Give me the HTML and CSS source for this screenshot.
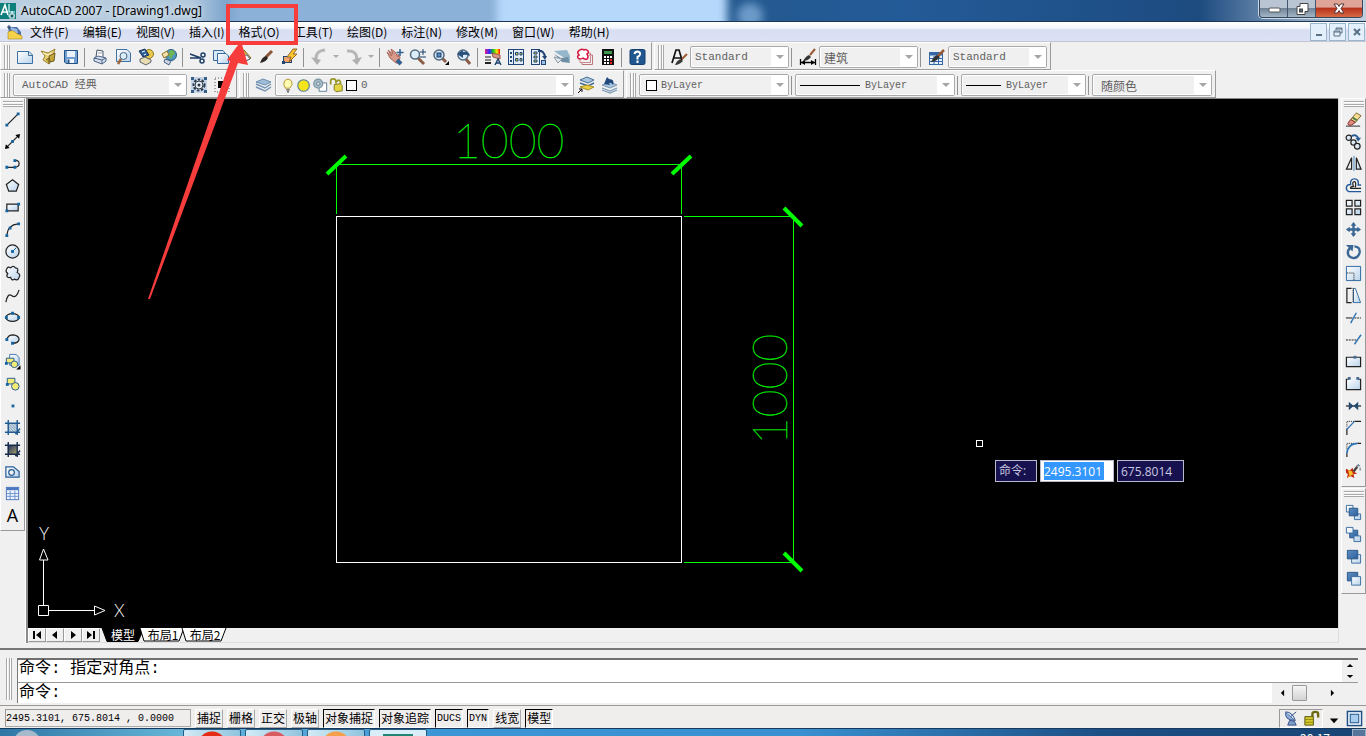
FILE: index.html
```html
<!DOCTYPE html>
<html lang="zh-CN">
<head>
<meta charset="utf-8">
<meta name="viewport" content="width=device-width, initial-scale=1">
<title>AutoCAD 2007 - [Drawing1.dwg]</title>
<link rel="stylesheet" href="styles.css">
</head>
<body>
<svg class="defs" aria-hidden="true">
  <defs>
    <linearGradient id="paper" x1="0" y1="0" x2="1" y2="1"><stop offset="0" stop-color="#fff"/><stop offset="1" stop-color="#b9d3ec"/></linearGradient>
    <linearGradient id="deep" x1="0" y1="0" x2="1" y2="1"><stop offset="0" stop-color="#5f8fc4"/><stop offset="1" stop-color="#2c5f9b"/></linearGradient>
    <linearGradient id="dusk" x1="0" y1="0" x2="1" y2="1"><stop offset="0" stop-color="#22305e"/><stop offset="1" stop-color="#a9a36a"/></linearGradient>
    <linearGradient id="rainbow"><stop offset="0" stop-color="#e0218a"/><stop offset=".3" stop-color="#2c2cff"/><stop offset=".55" stop-color="#19c51b"/><stop offset=".8" stop-color="#ffe600"/><stop offset="1" stop-color="#f00"/></linearGradient>
    <pattern id="hatch" width="3" height="3" patternUnits="userSpaceOnUse"><path d="M0 0L3 3" stroke="#2c6aa0" stroke-width="1"/></pattern>
  </defs>
</svg>

<header class="titlebar">
  <div class="glass" aria-hidden="true"><span class="glass-tab"></span><span class="glass-tab bright"></span><span class="glass-dot"></span></div>
  <svg class="app-logo" viewBox="0 0 16 16"><rect width="16" height="16" fill="#0f7f7c"/><path d="M1 12L5 2L8 12M2 9H8" fill="none" stroke="#fff" stroke-width="1.6"/><path d="M9 1V9H15M12 8V15M8 13H15" fill="none" stroke="#dff" stroke-width="1.2"/><rect x="10" y="11" width="4" height="4" fill="#0f5f66" stroke="#fff"/></svg>
  <h1>AutoCAD 2007 - [Drawing1.dwg]</h1>
  <div class="window-buttons">
    <button aria-label="最小化"><svg viewBox="0 0 16 14"><rect x="3" y="6" width="11" height="4" rx="1" fill="#fff" stroke="#555"/></svg></button>
    <button aria-label="还原"><svg viewBox="0 0 16 14"><path d="M6 1.500H14V9.500H11V12.500H3V4.500H6Z" fill="#fff" stroke="#444"/><rect x="5.500" y="7" width="3" height="3" fill="#567" stroke="#444"/></svg></button>
    <button class="close" aria-label="关闭"><svg viewBox="0 0 16 14"><path d="M3 2H6.500L8 4.500L9.500 2H13L10 6.500L13 11H9.500L8 8.500L6.500 11H3L6 6.500Z" fill="#fff" stroke="#533"/></svg></button>
  </div>
</header>

<nav class="menubar" aria-label="菜单">
  <svg class="doc-logo" viewBox="0 0 16 16"><path d="M1 3H10L14 8V15H3Z" fill="#4c6eaa"/><path d="M3 3L10 5L11 9H6Z" fill="#9db9e2"/><path d="M1 8Q6 5 9 9L15 12V15H1Z" fill="#f6d24a" stroke="#a8861a" stroke-width=".6"/><path d="M2 1V5M0 3H4" stroke="#246"/></svg>
  <button>文件(F)</button><button>编辑(E)</button><button>视图(V)</button><button>插入(I)</button><button class="marked">格式(O)</button><button>工具(T)</button><button>绘图(D)</button><button>标注(N)</button><button>修改(M)</button><button>窗口(W)</button><button>帮助(H)</button>
  <div class="mdi-buttons">
    <button aria-label="最小化文档"><svg viewBox="0 0 12 12"><path d="M3 9H9" stroke="#5a7186" stroke-width="2"/></svg></button>
    <button aria-label="还原文档"><svg viewBox="0 0 12 12"><path d="M4 4V2H10V7H8M4 3H10M2 5H8V10H2ZM2 6H8" fill="none" stroke="#5a7186"/></svg></button>
    <button aria-label="关闭文档"><svg viewBox="0 0 12 12"><path d="M3 3L9 9M9 3L3 9" stroke="#5a7186" stroke-width="2"/></svg></button>
  </div>
</nav>

<div class="toolrow">
  <div class="toolbar">
    <i class="grip"></i>
    <button aria-label="新建"><svg viewBox="0 0 18 18"><path d="M1.500 3.500H13L16.500 7V15.500H1.500Z" fill="url(#paper)" stroke="#3a6f9f"/><path d="M12.500 4V7.500H16" fill="none" stroke="#3a6f9f"/></svg></button>
    <button aria-label="打开"><svg viewBox="0 0 18 18"><path d="M2 3L9 5L16 1L14 8L10 16L4 12L6 8Z" fill="#e9cf74" stroke="#9a8230"/><path d="M10 16V10L7 12M10 8L16 5L15 13L11 14Z" fill="#c5a63c" stroke="#6d5a1e"/><path d="M4 5L9 7L13 5" stroke="#fff6c8" fill="none"/></svg></button>
    <button aria-label="保存"><svg viewBox="0 0 18 18"><path d="M2.500 2.500H15.500V15.500H4L2.500 14Z" fill="#6d9fd2" stroke="#205182"/><rect x="5" y="3" width="8" height="6" fill="#e8f2fc"/><rect x="5" y="11" width="7" height="4" fill="#f4f8fc"/><path d="M6.500 11.500V15" stroke="#205182" stroke-width="2"/></svg></button>
    <i class="sep"></i>
    <button aria-label="打印"><svg viewBox="0 0 18 18"><path d="M5 9L6 2L12 3L12 9" fill="#fff" stroke="#456"/><path d="M3 10L7 8L15 10V13L11 16L3 13Z" fill="#d5deeb" stroke="#4a6286"/><path d="M3 10L11 12L15 10M11 12V16" fill="none" stroke="#4a6286"/><path d="M7 5H11" stroke="#99a"/></svg></button>
    <button aria-label="打印预览"><svg viewBox="0 0 18 18"><path d="M2.500 1.500H13L16.500 5V13.500H2.500Z" fill="url(#paper)" stroke="#41719f"/><path d="M7 11L4 16" stroke="#a06640" stroke-width="2.500"/><circle cx="9.500" cy="8" r="3.500" fill="#d9ecfa" stroke="#47637e"/></svg></button>
    <button aria-label="发布"><svg viewBox="0 0 18 18"><circle cx="12" cy="6" r="4.500" fill="#e9c94b" stroke="#8d7a20"/><path d="M2 3L8 1L12 7L6 9Z" fill="#2f5f98" stroke="#1a3558"/><path d="M3 11L8 9L14 12V14L9 17L3 14Z" fill="#e7ddb0" stroke="#5f6474"/><path d="M5 4L8 3M7 7L9 6" stroke="#fff"/></svg></button>
    <button aria-label="三维 DWF"><svg viewBox="0 0 18 18"><circle cx="11" cy="7" r="5.500" fill="#4f98bd" stroke="#275c80"/><path d="M10 2Q15 2 15 6Q11 7 12 11Q7 9 10 2" fill="#6db653"/><path d="M2 6L7 3L9 7L4 10Z" fill="#f0e2aa" stroke="#8e7427"/><path d="M5 11L11 13L9 17L4 14Z" fill="#cad6e5" stroke="#4a6484"/></svg></button>
    <i class="sep"></i>
    <button aria-label="剪切"><svg viewBox="0 0 18 18"><path d="M1 6L12 10M1 10H12" stroke="#1d3d67" stroke-width="1.500"/><circle cx="14" cy="7" r="2" fill="none" stroke="#1d3d67" stroke-width="1.500"/><circle cx="13" cy="13" r="2" fill="none" stroke="#1d3d67" stroke-width="1.500"/></svg></button>
    <button aria-label="复制"><svg viewBox="0 0 18 18"><path d="M1.500 2.500H11L13 5V12.500H1.500Z" fill="#d9e9f7" stroke="#386b9c"/><path d="M5.500 5.500H14L16.500 8V15.500H5.500Z" fill="url(#paper)" stroke="#386b9c"/></svg></button>
    <button aria-label="粘贴"><svg viewBox="0 0 18 18"><path d="M3 5L9 2L16 10L8 15L3 12Z" fill="#d9b64c" stroke="#806522"/><path d="M6 8L12 7L15 11L8 14Z" fill="#f2f6fb" stroke="#586f8b"/></svg></button>
    <button aria-label="特性匹配"><svg viewBox="0 0 18 18"><path d="M8 9L14 3" stroke="#8a5637" stroke-width="3"/><path d="M2 15Q4 9 8 8L10 10Q8 14 2 15" fill="#2a2522"/></svg></button>
    <button aria-label="块编辑器"><svg viewBox="0 0 18 18"><rect x="2.500" y="8.500" width="8" height="6" fill="#f4a46b" stroke="#23466f"/><path d="M12 1L6 9H10L8 14L16 6H12L16 1Z" fill="#ffc62d" stroke="#94642b"/><rect x="1" y="13" width="3" height="3" fill="#23466f"/></svg></button>
    <i class="sep"></i>
    <button aria-label="放弃"><svg viewBox="0 0 18 18"><path d="M15 2Q5 3 6 12" fill="none" stroke="#b6b6b6" stroke-width="3"/><path d="M1 9L11 12L7 17Z" fill="#b0b0b0"/></svg></button>
    <button class="drop" aria-label="放弃列表"><svg viewBox="0 0 8 8"><path d="M1 2H7L4 5Z" fill="#aaa"/></svg></button>
    <button aria-label="重做"><svg viewBox="0 0 18 18"><path d="M2 3Q12 2 12 12" fill="none" stroke="#b6b6b6" stroke-width="3"/><path d="M7 12L17 9L12 17Z" fill="#b0b0b0"/></svg></button>
    <button class="drop" aria-label="重做列表"><svg viewBox="0 0 8 8"><path d="M1 2H7L4 5Z" fill="#aaa"/></svg></button>
    <i class="sep"></i>
    <button aria-label="平移"><svg viewBox="0 0 18 18"><path d="M1 4L6 8L2 2L7 6L5 1L9 4L12 9V6L14 9L13 15L10 15L4 10Z" fill="#d89a8a" stroke="#a86759"/><path d="M11 12L15 16" stroke="#315f91" stroke-width="4"/><path d="M14 1V8M10.500 4.500H17.500" stroke="#315f91" stroke-width="1.500"/></svg></button>
    <button aria-label="实时缩放"><svg viewBox="0 0 18 18"><path d="M9 10L15 16" stroke="#8b5d47" stroke-width="3"/><circle cx="6" cy="6.500" r="4.500" fill="#dcecf8" stroke="#526a82" stroke-width="1.500"/><path d="M14 1V7M11 4H17M11 9H17" stroke="#173e6b"/></svg></button>
    <button aria-label="窗口缩放"><svg viewBox="0 0 18 18"><path d="M10 10L14 14" stroke="#8b5d47" stroke-width="3"/><circle cx="7" cy="7" r="5" fill="#dcecf8" stroke="#526a82" stroke-width="1.500"/><rect x="5" y="5" width="4" height="4" fill="#5b8cc0" stroke="#173e6b"/><path d="M17 13V17H13Z"/></svg></button>
    <button aria-label="缩放上一个"><svg viewBox="0 0 18 18"><path d="M10 10L15 16" stroke="#8b5d47" stroke-width="3"/><circle cx="8" cy="7" r="5" fill="#dcecf8" stroke="#526a82" stroke-width="1.500"/><path d="M2 6L8 2V4Q14 3 15 8Q11 6 8 7V10Z" fill="#294f7c"/></svg></button>
    <i class="sep"></i>
    <button aria-label="特性"><svg viewBox="0 0 18 18"><rect x="1" y="1" width="15" height="5" fill="url(#rainbow)"/><path d="M8 5L16 7V11L9 9Z" fill="#d89a8a" stroke="#965345"/><path d="M1 9H7M1 12H7" stroke="#222"/><path d="M1 15H7" stroke="#222" stroke-width="2"/><path d="M11 17L14 11L17 17M12 15H16" fill="none" stroke="#173e6b" stroke-width="1.300"/></svg></button>
    <button aria-label="设计中心"><svg viewBox="0 0 18 18"><rect x="1.500" y="1.500" width="15" height="15" fill="#e3edf7" stroke="#1f4675"/><path d="M6.500 2V16" stroke="#1f4675"/><path d="M3 5H5M3 9H5M3 13H5" stroke="#1f4675" stroke-width="2"/><path d="M8.500 4.500H11V7H8.500ZM13 4.500H15V7H13ZM8.500 10.500H11V13H8.500ZM13 10.500H15V13H13Z" fill="#d9c64a" stroke="#1f4675"/></svg></button>
    <button aria-label="工具选项板"><svg viewBox="0 0 18 18"><rect x="1.500" y="1.500" width="8" height="15" fill="#e3edf7" stroke="#1f4675"/><path d="M4 4H7V6H4ZM4 8H7V10H4ZM4 12H7V14H4Z" fill="#d9c64a" stroke="#1f4675"/><path d="M8 3Q14 2 15 9" fill="none" stroke="#1f4675" stroke-width="2"/><path d="M12 8H17L15 12Z" fill="#1f4675"/><rect x="11.500" y="12.500" width="4" height="4" fill="#9fc3e6" stroke="#1f4675"/></svg></button>
    <button aria-label="图纸集"><svg viewBox="0 0 18 18"><path d="M1 3L14 2L17 8V13L5 6Z" fill="#94b7cb"/><path d="M1 6L8 10L15 9L17 15L9 14Z" fill="#6f8ea4"/><path d="M1 9L9 11L5 15Z" fill="#e1e9ef" stroke="#8a99a6"/></svg></button>
    <button aria-label="标记集"><svg viewBox="0 0 18 18"><path d="M13 7H16.500V16.500H6V14" fill="none" stroke="#b77"/><path d="M12 5H14.500V14.500H4V12" fill="none" stroke="#c88"/><path d="M4 2Q6 .5 8 2Q10 .5 12 3Q13 5 11 6Q13 9 11 11Q9 12 7 10Q4 12 2 10Q1 8 3 7Q0 4 4 2Z" fill="#fff" stroke="#d4143e" stroke-width="1.500"/></svg></button>
    <button aria-label="快速计算器"><svg viewBox="0 0 18 18"><rect x="3" y="1" width="12" height="16" fill="#111"/><rect x="5" y="3" width="8" height="3" fill="#3b9b4c"/><path d="M5 9H7M8 9H10M11 9H13M5 12H7M8 12H10M5 15H7M8 15H10" stroke="#fff" stroke-width="2"/><path d="M11 12H13M11 15H13" stroke="#e22" stroke-width="2"/></svg></button>
    <i class="sep"></i>
    <button aria-label="帮助"><svg viewBox="0 0 18 18"><rect x="2" y="1.500" width="15" height="15" rx="1.500" fill="#20578f" stroke="#153f6e"/><path d="M6.500 6Q7 3.500 9.500 3.500Q12.500 4 12 6.500Q11.500 8 9.500 9V11.500M9.500 12.500V15" fill="none" stroke="#fff" stroke-width="2"/></svg></button>
  </div>
  <div class="toolbar">
    <i class="grip"></i>
    <button aria-label="文字样式"><svg viewBox="0 0 18 18"><path d="M2 15L6 2H9L12 12M4 10H11" fill="none" stroke="#111" stroke-width="1.700"/><path d="M12 11L17 6" stroke="#9b5a35" stroke-width="2"/><path d="M5 17Q7 12 11 11L13 13Q9 17 5 17" fill="#383838"/></svg></button>
    <div class="combo w99"><select aria-label="文字样式控制"><option>Standard</option></select><i></i></div>
    <i class="sep"></i>
    <button aria-label="标注样式"><svg viewBox="0 0 18 18"><path d="M1.500 11V17M16.500 11V17M2 14.500H16" stroke="#000" stroke-width="1.300"/><path d="M2 14.500L6 12V17ZM16 14.500L12 12V17Z"/><path d="M11 7L16 1" stroke="#9b5a35" stroke-width="2"/><path d="M4 13Q7 8 10 7L12 9Q9 13 4 13" fill="#333"/></svg></button>
    <div class="combo w99 han"><select aria-label="标注样式控制"><option>建筑</option></select><i></i></div>
    <i class="sep"></i>
    <button aria-label="表格样式"><svg viewBox="0 0 18 18"><rect x="1.500" y="4.500" width="13" height="12" fill="#e4effc" stroke="#3567a7"/><path d="M2 6H14" stroke="#3567a7" stroke-width="3"/><path d="M2 10.500H14M2 13.500H14M6 8V16M10.500 8V16" stroke="#3567a7"/><path d="M10 8L16 2" stroke="#9b5a35" stroke-width="2.500"/><path d="M3 14Q6 8 9 7L12 9Q8 14 3 14" fill="#333"/></svg></button>
    <div class="combo w99"><select aria-label="表格样式控制"><option>Standard</option></select><i></i></div>
  </div>
</div>

<div class="toolrow">
  <div class="toolbar">
    <i class="grip"></i>
    <div class="combo w174 inset"><select aria-label="工作空间"><option>AutoCAD 经典</option></select><i></i></div>
    <button aria-label="工作空间设置"><svg viewBox="0 0 18 18"><rect x="1" y="1" width="16" height="16" fill="#c6d6e8"/><path d="M1 1H4V4H1ZM14 1H17V4H14ZM1 14H4V17H1ZM14 14H17V17H14Z" fill="#345d8a"/><circle cx="9" cy="9" r="5.500" fill="#dbe4ec" stroke="#29394b" stroke-width="2" stroke-dasharray="2.500 1.500"/><circle cx="9" cy="9" r="4" fill="#e9eef3" stroke="#29394b"/><circle cx="9" cy="9" r="1.500" fill="#29394b"/></svg></button>
    <button aria-label="我的工作空间"><svg viewBox="0 0 18 18"><rect x="2" y="2" width="14" height="14" fill="none" stroke="#555" stroke-dasharray="1 2"/><path d="M5 5H12V12H5ZM13 3H16V6H13Z"/></svg></button>
  </div>
  <div class="toolbar">
    <i class="grip"></i>
    <button aria-label="图层特性"><svg viewBox="0 0 18 18"><path d="M1 6L8 3L16 6L10 9Z" fill="#9fbcd8" stroke="#6f90ae"/><path d="M1 8L10 12L16 8M1 11L10 15L16 11" fill="none" stroke="#7394b4" stroke-width="1.500"/></svg></button>
    <div class="combo w299">
      <svg viewBox="0 0 18 18"><path d="M6 12Q3 8 5 4Q9 0 13 4Q15 8 11 12Z" fill="#fffbb0" stroke="#a98d25"/><path d="M7 14H11M8 16H10" stroke="#555" stroke-width="1.500"/></svg>
      <svg viewBox="0 0 18 18"><circle cx="8.500" cy="9" r="6.500" fill="#f4e51c" stroke="#5c8192" stroke-width="1.300"/></svg>
      <svg viewBox="0 0 18 18"><path d="M10 6H16.500V15.500H8V12" fill="#fff" stroke="#55738f"/><circle cx="7" cy="7" r="5" fill="#a7bcc8" stroke="#7f9aa6" stroke-width="1.500"/><circle cx="7" cy="7" r="2" fill="#c9d6dc" stroke="#6e8794"/></svg>
      <svg viewBox="0 0 18 18"><path d="M3 8V4Q3 1.500 6 1.500Q9 1.500 9 5V7M10 5Q12 1 14 5V8" fill="none" stroke="#98972a" stroke-width="2"/><path d="M7 8L14 7L16 9V15L9 16L7 14Z" fill="#e4d545" stroke="#77741c"/></svg>
      <b class="swatch"></b>
      <select aria-label="图层"><option>0</option></select><i></i>
    </div>
    <button aria-label="置为当前图层"><svg viewBox="0 0 18 18"><path d="M3 4L10 1L17 4L11 7Z" fill="#a9c6df" stroke="#446f96"/><path d="M3 7L11 10L17 7" fill="none" stroke="#446f96" stroke-width="1.500"/><path d="M3 11L10 9L17 11L11 14Z" fill="#eccf45" stroke="#a88f22"/><path d="M1 17L5 13M2 13H5V16" fill="none" stroke="#111"/></svg></button>
    <button aria-label="上一个图层"><svg viewBox="0 0 18 18"><path d="M2 9L10 6L17 9L10 12Z" fill="#a9c6df" stroke="#7d9ab5"/><path d="M2 12L10 15L17 12M2 14L10 17L17 14" fill="none" stroke="#7d9ab5" stroke-width="1.300"/><path d="M4 8L7 1L9 3Q15 3 13 9Q11 6 9 7L10 9Z" fill="#21497d"/></svg></button>
  </div>
  <div class="toolbar">
    <i class="grip"></i>
    <div class="combo w150 by"><b class="swatch"></b><select aria-label="颜色"><option>ByLayer</option></select><i></i></div>
    <i class="sep"></i>
    <div class="combo w160 by"><b class="stroke"></b><select aria-label="线型"><option>ByLayer</option></select><i></i></div>
    <i class="sep"></i>
    <div class="combo w125 by"><b class="stroke short"></b><select aria-label="线宽"><option>ByLayer</option></select><i></i></div>
    <i class="sep"></i>
    <div class="combo w120 han inset"><select aria-label="打印样式"><option>随颜色</option></select><i></i></div>
  </div>
</div>

<main class="work">
  <aside class="dock left">
    <div class="palette">
      <i class="hgrip"></i>
      <button aria-label="直线"><svg viewBox="0 0 18 18"><path class="k" d="M3 15L15 3"/><path class="n" d="M1.500 13.500h3v3h-3zM13.500 1.500h3v3h-3z"/></svg></button>
      <button aria-label="构造线"><svg viewBox="0 0 18 18"><path class="k" d="M3 15L15 3"/><path d="M1 17L2 12L6 16ZM17 1L12 2L16 6Z"/><path class="n" d="M7.500 7.500h3v3h-3z"/></svg></button>
      <button aria-label="多段线"><svg viewBox="0 0 18 18"><path class="k" d="M3 13H11Q16 13 16 9Q16 5 11 6"/><path class="n" d="M1.500 11.500h3v3h-3zM10 11.500h3v3h-3zM10 4.500h3v3h-3z"/></svg></button>
      <button aria-label="正多边形"><svg viewBox="0 0 18 18"><path class="p" d="M9 3L15.500 8L13 15H5L2.500 8Z"/></svg></button>
      <button aria-label="矩形"><svg viewBox="0 0 18 18"><path class="p" d="M3 5.500H15V12.500H3Z"/><path class="n" d="M1.500 11h3v3h-3zM14 4h3v3h-3z"/></svg></button>
      <button aria-label="圆弧"><svg viewBox="0 0 18 18"><path class="k" d="M3 15Q4 4 15 3"/><path class="n" d="M1.500 14h3v3h-3zM5 6h3v3h-3zM14 1.500h3v3h-3z"/></svg></button>
      <button aria-label="圆"><svg viewBox="0 0 18 18"><circle class="p" cx="9" cy="9" r="7"/><path d="M9 9L13 5" stroke="#146099"/><path class="n" d="M7.500 7.500h3v3h-3z"/></svg></button>
      <button aria-label="修订云线"><svg viewBox="0 0 18 18"><path class="p" d="M4 9Q1 7 3 4Q4 1 7 3Q10 0 12 3Q16 3 14 8Q18 10 16 13Q15 17 11 15Q8 17 7 13Q3 14 3 11Z"/></svg></button>
      <button aria-label="样条曲线"><svg viewBox="0 0 18 18"><path class="k" d="M2 16Q4 6 8 9Q13 13 16 3"/></svg></button>
      <button aria-label="椭圆"><svg viewBox="0 0 18 18"><ellipse class="p" cx="9" cy="9" rx="7" ry="4"/><path class="n" d="M1 7.500h3v3h-3zM7.500 3h3v3h-3zM14 7.500h3v3h-3z"/></svg></button>
      <button aria-label="椭圆弧"><svg viewBox="0 0 18 18"><path class="p" d="M3 9Q4 4 10 4Q16 5 16 9Q15 13 9 13"/><path class="n" d="M1.500 7.500h3v3h-3zM7.500 11.500h3v3h-3z"/></svg></button>
      <button aria-label="插入块"><svg viewBox="0 0 18 18"><path d="M6 1.500H13L16 5V13H6Z" fill="url(#paper)" stroke="#4478ab"/><path class="y" d="M2.500 5.500H10.500V10.500H2.500Z"/><circle class="y" cx="11" cy="12" r="3.500"/><path class="n" d="M1 9.500h3v3h-3z"/><path d="M17.500 13V17.500H13Z"/></svg></button>
      <button aria-label="创建块"><svg viewBox="0 0 18 18"><path class="y" d="M3.500 3.500H11.500V9.500H3.500Z"/><circle class="y" cx="12" cy="12" r="4"/><path class="n" d="M2 8.500h3v3h-3z"/></svg></button>
      <button aria-label="点"><svg viewBox="0 0 18 18"><path class="n" d="M8 8h3v3h-3z"/></svg></button>
      <button aria-label="图案填充"><svg viewBox="0 0 18 18"><path d="M4 5H14V14H4Z" fill="url(#hatch)"/><path d="M4.500 1V17M14 1V17M1 4.500H17M1 14H17M12 16L17 10" fill="none" stroke="#205a91" stroke-width="1.500"/></svg></button>
      <button aria-label="渐变色"><svg viewBox="0 0 18 18"><path d="M4 5H14V14H4Z" fill="url(#dusk)"/><path d="M4.500 1V17M14 1V17M1 4.500H17M1 14H17M12 16L17 10" fill="none" stroke="#182b4a" stroke-width="1.500"/></svg></button>
      <button aria-label="面域"><svg viewBox="0 0 18 18"><path d="M2 4H10L16 9V15H2Z" fill="url(#paper)" stroke="#285f94" stroke-width="1.300"/><circle cx="8" cy="10" r="3" fill="#f0f0f0" stroke="#285f94" stroke-width="1.300"/></svg></button>
      <button aria-label="表格"><svg viewBox="0 0 18 18"><rect x="2.500" y="2.500" width="13" height="13" fill="#eef4fe" stroke="#4c78c0"/><path d="M3 4H15" stroke="#4c78c0" stroke-width="3"/><path d="M3 9H15M3 12H15M6.500 6V15M11.500 6V15" stroke="#6b92d0"/></svg></button>
      <button class="letter" aria-label="多行文字">A</button>
    </div>
  </aside>

  <section class="sheet">
    <div class="canvas">
      <svg class="drawing" aria-label="1000 × 1000">
        <g transform="translate(-28 -99)">
          <rect x="336.500" y="216.500" width="345" height="346" class="white"/>
          <path class="dim" d="M336.500 214V164.500H681.500V214M684 216.500H793.500V562.500H684"/>
          <path class="tick" d="M327 174L346 156M672 174L691 156M784 208L802 226M784 553L802 571"/>
          <text class="dimtext" x="453" y="158">1000</text>
          <text class="dimtext" transform="translate(787 445) rotate(-90)">1000</text>
          <path class="white" d="M38.500 605.500H48.500V615.500H38.500ZM48.500 610.500H94M43.500 605V560M94.500 606L105 610.500L94.500 615ZM39.500 560L43.500 549L48 560Z"/>
          <text class="axis" x="39" y="540">Y</text><text class="axis" x="114" y="617">X</text>
          <rect class="white" x="976.500" y="440.500" width="6" height="6"/>
        </g>
      </svg>
      <div class="dynamic">
        <label for="dx">命令:</label>
        <input id="dx" class="active" value="2495.3101">
        <input aria-label="Y 坐标" value="675.8014">
      </div>
    </div>
    <div class="layouts">
      <button class="step" aria-label="第一个"><svg viewBox="0 0 12 12"><path d="M2 2H4V10H2ZM10 2V10L5 6Z"/></svg></button>
      <button class="step" aria-label="上一个"><svg viewBox="0 0 12 12"><path d="M8 2V10L3 6Z"/></svg></button>
      <button class="step" aria-label="下一个"><svg viewBox="0 0 12 12"><path d="M4 2V10L9 6Z"/></svg></button>
      <button class="step" aria-label="最后一个"><svg viewBox="0 0 12 12"><path d="M8 2H10V10H8ZM2 2V10L7 6Z"/></svg></button>
      <button class="tab on"><svg viewBox="0 0 42 14" preserveAspectRatio="none"><path d="M0 0L5 13.500H36L42 0Z"/></svg><span>模型</span></button>
      <button class="tab"><svg viewBox="0 0 42 14" preserveAspectRatio="none"><path d="M-2 0L2 13H37L42 0"/></svg><span>布局1</span></button>
      <button class="tab"><svg viewBox="0 0 42 14" preserveAspectRatio="none"><path d="M-2 0L2 13H37L42 0"/></svg><span>布局2</span></button>
    </div>
  </section>

  <aside class="dock right">
    <div class="palette">
      <i class="hgrip"></i>
      <button aria-label="删除"><svg viewBox="0 0 18 18"><path d="M1 16H16" stroke="#222"/><path d="M6 9L12 2L17 5L11 12Z" fill="#f5dc8e" stroke="#826132"/><path d="M6 9L11 12L7 15H4L3 13Z" fill="#e08a80" stroke="#80332c"/><path d="M8 7L13 10" stroke="#4f7c46" stroke-width="2"/></svg></button>
      <button aria-label="复制对象"><svg viewBox="0 0 18 18"><circle class="p" cx="4" cy="5" r="2.800"/><circle class="p" cx="9" cy="10" r="2.800"/><circle class="p" cx="13" cy="14" r="3"/><path d="M7 3Q13 1 14 6" fill="none" stroke="#275a93" stroke-width="2"/><path d="M11 5H17L14 9Z" fill="#275a93"/></svg></button>
      <button aria-label="镜像"><svg viewBox="0 0 18 18"><path class="k" d="M7 3V15H1.500Z"/><path d="M9.500 1V17" stroke="#3a84c4"/><path class="p" d="M12 3V15H17Z"/></svg></button>
      <button aria-label="偏移"><svg viewBox="0 0 18 18"><path d="M17 15.500H4Q1 14 1.500 11Q2 8 6 8Q5 2 10 2Q15 2 14 8.500H17" fill="none" stroke="#26599a" stroke-width="1.500"/><path d="M17 12H6Q5 10 9 10Q7 5 10 5Q12 5 11 11" fill="none" stroke="#222" stroke-width="1.300"/></svg></button>
      <button aria-label="阵列"><svg viewBox="0 0 18 18"><path class="p" d="M1.500 1.500h6v6h-6zM10.500 1.500h6v6h-6zM1.500 10.500h6v6h-6zM10.500 10.500h6v6h-6z"/></svg></button>
      <button aria-label="移动"><svg viewBox="0 0 18 18"><path d="M9 3V15M3 9H15" stroke="#3b6795" stroke-width="2.500"/><path d="M9 1L12 5H6ZM9 17L12 13H6ZM1 9L5 6V12ZM17 9L13 6V12Z" fill="#3b6795"/></svg></button>
      <button aria-label="旋转"><svg viewBox="0 0 18 18"><path d="M10 3.500Q16 4 15.500 10Q14 16 9 16Q3 15 3 10Q3 7 6 5" fill="none" stroke="#3b6795" stroke-width="2.500"/><path d="M1 2H9L8 9Z" fill="#3b6795"/></svg></button>
      <button aria-label="缩放"><svg viewBox="0 0 18 18"><path d="M1.500 1.500H16.500V16.500H1.500Z" fill="url(#paper)" stroke="#2b659f"/><path d="M2 8.500H9.500V16" fill="none" stroke="#111" stroke-dasharray="1 1"/></svg></button>
      <button aria-label="拉伸"><svg viewBox="0 0 18 18"><path d="M9 1.500H11L16.500 16.500H9Z" fill="url(#paper)" stroke="#346d9f"/><path class="k" d="M7 1.500H2V16.500H7"/><path d="M8.500 1V17" stroke="#111" stroke-dasharray="1 1"/></svg></button>
      <button aria-label="修剪"><svg viewBox="0 0 18 18"><path d="M1 9.500H8" stroke="#111"/><path d="M10 9.500H17" stroke="#111" stroke-dasharray="2 1"/><path d="M6 15L12 4" stroke="#2f74b4" stroke-width="1.500"/></svg></button>
      <button aria-label="延伸"><svg viewBox="0 0 18 18"><path d="M1 9.500H12" stroke="#111" stroke-dasharray="2 1"/><path d="M10 14L17 4" stroke="#2f74b4" stroke-width="1.500"/></svg></button>
      <button aria-label="打断于点"><svg viewBox="0 0 18 18"><path class="p" d="M1.500 4.500H16.500V14.500H1.500Z"/><path d="M9 3h3v3h-3z" fill="#456a91"/></svg></button>
      <button aria-label="打断"><svg viewBox="0 0 18 18"><path class="p" d="M4 4.500H1.500V15.500H16.500V4.500H14"/><path d="M3 2h3v3h-3zM12 2h3v3h-3z" fill="#456a91"/></svg></button>
      <button aria-label="合并"><svg viewBox="0 0 18 18"><path class="k" d="M1 9.500H17"/><path d="M4 5L9 9.500L4 14ZM14 5L9 9.500L14 14Z" fill="#244a70"/></svg></button>
      <button aria-label="倒角"><svg viewBox="0 0 18 18"><path d="M2 8V2.500H10" fill="none" stroke="#111" stroke-dasharray="1 1"/><path class="k" d="M2 10V17M10 2.500H17"/><path d="M2 11L10 2.500" stroke="#2f74b4" stroke-width="1.500"/></svg></button>
      <button aria-label="圆角"><svg viewBox="0 0 18 18"><path d="M2 8V2.500H10" fill="none" stroke="#111" stroke-dasharray="1 1"/><path class="k" d="M2 13V17M13 2.500H17"/><path d="M2 13Q3 3 13 2.500" fill="none" stroke="#2f74b4" stroke-width="2"/></svg></button>
      <button aria-label="分解"><svg viewBox="0 0 18 18"><path d="M1 6L5 8L8 5L9 9L13 11L9 12L10 16L6 14L2 16L3 12L1 10Z" fill="#c52b12"/><path d="M4 8L7 9L8 12L5 13ZM3 15L6 13" fill="#f8c62a" stroke="#f8c62a"/><path d="M9 9L13 4" stroke="#493e38" stroke-width="2.500"/><path d="M14 1V3M12 3H16M16 5V8" stroke="#49617d"/></svg></button>
    </div>
    <div class="palette order">
      <i class="hgrip"></i>
      <button aria-label="前置"><svg viewBox="0 0 18 18"><path class="l" d="M1.500 1.500h7v7h-7zM10 10.500h6.500v6h-6.500z"/><path class="d" d="M4.500 4.500h9v8h-9z"/></svg></button>
      <button aria-label="后置"><svg viewBox="0 0 18 18"><path class="d" d="M5 4.500h8.500v8h-8.500z"/><path class="l" d="M1.500 1.500h7v6h-7zM9.500 10.500h7v6h-7z"/></svg></button>
      <button aria-label="置于对象之上"><svg viewBox="0 0 18 18"><path class="l" d="M7 7h9.500v9h-9.500z"/><path class="d" d="M2.500 2.500h11v9h-11z"/></svg></button>
      <button aria-label="置于对象之下"><svg viewBox="0 0 18 18"><path class="d" d="M2.500 2.500h11v9h-11z"/><path class="l" d="M7 7h9.500v9h-9.500z"/></svg></button>
    </div>
  </aside>
</main>

<section class="command">
  <i class="grip"></i>
  <div class="console">
    <div class="history"><p>命令: 指定对角点:</p>
      <div class="vscroll"><button aria-label="向上滚动"><svg viewBox="0 0 10 6"><path d="M1 5L5 1L9 5Z"/></svg></button><button aria-label="向下滚动"><svg viewBox="0 0 10 6"><path d="M1 1L5 5L9 1Z"/></svg></button></div>
    </div>
    <div class="prompt"><label for="cmd">命令:</label><input id="cmd">
      <div class="hscroll"><button aria-label="向左滚动"><svg viewBox="0 0 6 10"><path d="M5 1V9L1 5Z"/></svg></button><span class="thumb"></span><button class="end" aria-label="向右滚动"><svg viewBox="0 0 6 10"><path d="M1 1V9L5 5Z"/></svg></button></div>
    </div>
  </div>
</section>

<footer class="status">
  <output class="coords">2495.3101, 675.8014 , 0.0000</output>
  <div class="modes">
    <button>捕捉</button><button>栅格</button><button>正交</button><button>极轴</button><button class="on">对象捕捉</button><button class="on">对象追踪</button><button class="on mono">DUCS</button><button class="on mono">DYN</button><button>线宽</button><button class="on">模型</button>
  </div>
  <div class="tray">
    <div class="tray-box">
      <button aria-label="通讯中心"><svg viewBox="0 0 18 18"><path d="M3 2Q1 11 13 11L8 7Z" fill="#8fb0db" stroke="#2e4d86"/><path d="M3 2Q10 2 13 11" fill="#c9daf1" stroke="#2e4d86"/><path d="M8 7L14 2" fill="none" stroke="#2e4d86"/><path d="M7 11L5 16H14L12 12Z" fill="#7f9ccb" stroke="#2e4d86"/></svg></button>
      <button aria-label="锁定"><svg viewBox="0 0 18 18"><path d="M10 7V4Q10 2 13 2Q16 2 16 4V8" fill="none" stroke="#6b6a12" stroke-width="2.500"/><path d="M2 7H11V16H2Z" fill="#d5c928" stroke="#55530d"/><path d="M2 10H11M2 13H11" stroke="#8c8516"/></svg></button>
    </div>
    <button aria-label="状态栏菜单"><svg viewBox="0 0 18 18"><path d="M4 9H13L8.500 14Z"/></svg></button>
    <button aria-label="全屏显示"><svg viewBox="0 0 18 18"><rect x="1.500" y="1.500" width="15" height="15" fill="#eaf4ff" stroke="#1e4f82" stroke-width="1.500"/><rect x="4.500" y="4.500" width="9" height="9" fill="#a7ceef" stroke="#1e4f82"/></svg></button>
  </div>
</footer>

<div class="taskbar">
  <span class="orb"></span>
  <span class="task red"></span><span class="task rose"></span><span class="task orange"></span><span class="task teal"></span>
  <time>20:17</time><span class="peek"></span>
</div>

<svg class="callout" aria-hidden="true"><rect x="228" y="6" width="68" height="37"/><path d="M241 41L248 65L238 63L150 299L148 299L230 61L227 60Z"/></svg>
</body>
</html>
```

FILE: styles.css
```css
* { box-sizing: border-box; }
body {
  margin: 0;
  height: 100vh;
  display: flex;
  flex-direction: column;
  overflow: hidden;
  position: relative;
  background: #f0f0f0;
  color: #000;
  font: 12px "Noto Sans CJK SC", "Noto Sans", sans-serif;
}
button, input, select { font: inherit; color: inherit; margin: 0; padding: 0; border: 0; background: none; border-radius: 0; }
button { display: flex; align-items: center; justify-content: center; flex: none; white-space: nowrap; }
i, b { display: block; flex: none; }
svg { display: block; flex: none; }
.defs { position: absolute; width: 0; height: 0; }

.titlebar {
  flex: none;
  height: 22px;
  display: flex;
  align-items: center;
  gap: 5px;
  position: relative;
  overflow: hidden;
  border-bottom: 1px solid #1d3653;
  background: linear-gradient(90deg, #b9cfe0 0, #b4cbde 190px, #7fa7cf 225px, #8db2d8 480px, #24598f 740px, #235b98 900px, #1d4b80 1200px, #8aa3c0 1300px, #c0cddb 100%);
}
.glass { position: absolute; inset: -10px 0; display: flex; padding-left: 235px; filter: blur(4px); }
.glass-tab { width: 262px; background: #8cb1d8; }
.glass-tab.bright { width: 230px; background: #b6d8fb; border-radius: 0 8px 0 0; }
.glass-dot { width: 26px; height: 26px; margin: 13px 10px; border-radius: 50%; background: #6c9ac8; }
.app-logo { position: relative; width: 16px; height: 16px; }
.titlebar h1 { position: relative; margin: 0; flex: 1; font: 12px "Noto Sans", sans-serif; text-shadow: 0 0 6px #fff; }
.window-buttons { position: relative; align-self: flex-start; display: flex; margin-right: 3px; border: 1px solid #34465a; border-top: 0; border-radius: 0 0 4px 4px; overflow: hidden; box-shadow: 0 0 0 1px #c9d9e8; }
.window-buttons button { width: 28px; height: 17px; background: linear-gradient(#b9c5d2 45%, #718598 50%, #a4b6c8); border-right: 1px solid #43566b; }
.window-buttons svg { width: 16px; height: 14px; }
.window-buttons .close { width: 46px; border: 0; background: linear-gradient(#dea497 40%, #b8321c 50%, #d76b45); }

.menubar { flex: none; height: 20px; display: flex; align-items: stretch; padding-left: 7px; background: linear-gradient(#fff, #f4f6fc 6px, #d8def1 8px, #dde3f5); border-bottom: 1px solid #c3c6d0; }
.doc-logo { width: 16px; height: 16px; align-self: center; }
.menubar > button { padding: 0 7px; line-height: 18px; }
.mdi-buttons { display: flex; gap: 2px; margin: 1px 1px 0 auto; }
.mdi-buttons button { width: 17px; background: #e3effa; border: 1px solid #9bb5cc; }
.mdi-buttons svg { width: 12px; height: 12px; }

.toolrow { flex: none; display: flex; height: 28px; gap: 2px; }
.toolbar { display: flex; align-items: center; padding: 2px 3px 0; border: 1px solid; border-color: #fff #9b9b9b #9b9b9b #fff; height: 28px; }
.toolbar > button { width: 23px; height: 24px; }
.toolbar > button svg { width: 18px; height: 18px; }
.toolbar > .drop { width: 12px; }
.toolbar > .drop svg { width: 8px; height: 8px; }
.grip { width: 6px; height: 24px; margin-right: 3px; border: 1px solid; border-width: 0 1px; border-color: #a8a8a8; background: linear-gradient(90deg, #fff 1px, #f0f0f0 1px 2px, #aaa 2px 3px, #fff 3px); }
.sep { width: 1px; height: 19px; margin: 0 3px 0 2px; background: #929292; }
.combo { height: 22px; display: flex; align-items: center; padding: 0 2px 0 4px; background: #f0f0f0; border: 1px solid #aaa; border-radius: 2px; box-shadow: inset 0 0 0 1px #fff; color: #606060; font: 11px "Liberation Mono", "Noto Sans CJK SC", monospace; }
.combo + .sep + button { margin-left: 1px; }
.combo select { appearance: none; flex: 1; min-width: 0; height: 18px; opacity: 1; }
.combo > i { width: 17px; height: 20px; margin-right: -2px; background: #fff; display: grid; place-items: center; pointer-events: none; }
.combo > i::after { content: ""; border: 4px solid transparent; border-top-color: #a5a5a5; border-bottom: 0; }
.combo > svg { width: 16px; height: 17px; }
.combo.han { font: 12px "Noto Sans CJK SC", sans-serif; }
.combo.by { font-size: 10px; }
.combo.inset { padding-left: 8px; }
.swatch { width: 11px; height: 11px; margin: 0 4px 0 2px; background: #fff; border: 1px solid #000; }
.stroke { width: 60px; height: 1px; margin: 0 5px 0 0; background: #000; }
.stroke.short { width: 35px; }
.w99 { width: 99px; } .w120 { width: 120px; } .w125 { width: 125px; } .w150 { width: 150px; } .w160 { width: 160px; } .w174 { width: 174px; } .w299 { width: 299px; }

.work { flex: 1; min-height: 0; display: flex; }
.dock { flex: none; width: 26px; }
.dock.left { border-right: 1px solid #fff; }
.dock.right { width: 28px; padding-left: 2px; border-left: 1px solid #ddd; }
.palette { display: flex; flex-direction: column; align-items: center; padding-bottom: 4px; border: 1px solid; border-color: #fff #999 #999 #fff; }
.palette + .palette { margin-top: 1px; }
.palette button { width: 22px; height: 22px; }
.palette svg { width: 17px; height: 17px; }
.hgrip { width: 20px; height: 6px; margin: 2px 0 1px; border: 1px solid #a8a8a8; border-width: 1px 0; background: linear-gradient(#fff 1px, #f0f0f0 1px 2px, #aaa 2px 3px, #fff 3px); }
.palette.order .hgrip { margin-bottom: 4px; }
.letter { font: 18px "Open Sans", sans-serif; }
.k { fill: none; stroke: #222; stroke-width: 1.3px; }
.p { fill: url(#paper); stroke: #222; stroke-width: 1.3px; }
.n { fill: #14649f; }
.y { fill: #f2ec77; stroke: #24588c; }
.l { fill: url(#paper); stroke: #3a6d9f; }
.d { fill: url(#deep); stroke: #285787; }

.sheet { flex: 1; min-width: 0; display: flex; flex-direction: column; border: 2px solid #8b8b8b; border-width: 1px 0 0 2px; }
.canvas { flex: 1; min-height: 0; position: relative; background: #000; overflow: hidden; }
.drawing { position: absolute; inset: 0; width: 100%; height: 100%; }
.white { fill: none; stroke: #fff; }
.dim { fill: none; stroke: #0f0; }
.tick { fill: none; stroke: #0f0; stroke-width: 4px; }
.dimtext { fill: #0f0; stroke: #0f0; stroke-width: .3px; font: 100 48px Lato, sans-serif; }
.axis { fill: #fff; font: 300 17px Lato, sans-serif; }
.dynamic { position: absolute; left: 967px; top: 361px; display: flex; gap: 3px; color: #c9c9e0; font: 12px "Open Sans", "Noto Sans CJK SC", sans-serif; }
.dynamic label, .dynamic input { height: 22px; border: 1px solid #b9b9cc; background: #17114f; padding: 0 3px; line-height: 20px; width: 67px; }
.dynamic label { width: 42px; }
.dynamic .active { width: 74px; color: #fff; background: linear-gradient(#3397fd, #3397fd) 3px 1px / 60px 18px no-repeat #fff; }
.layouts { flex: none; height: 15px; display: flex; background: #f0f0f0; border-bottom: 1px solid #ddd; }
.step { width: 18px; background: #f0f0f0; border: 1px solid; border-color: #fff #999 #999 #fff; }
.step svg { width: 12px; height: 12px; }
.tab { position: relative; width: 42px; }
.tab.on { margin: 0 -2px 0 2px; }
.tab svg { position: absolute; inset: 0; width: 42px; height: 14px; overflow: visible; fill: #fff; stroke: #000; }
.tab span { position: relative; line-height: 14px; }
.tab.on { color: #fff; }
.tab.on svg { fill: #000; }

.command { flex: none; display: flex; margin-top: 5px; padding: 8px 8px 2px 6px; border-top: 2px solid #777; }
.command > .grip { height: 42px; }
.console { flex: 1; min-width: 0; margin-left: 2px; border-left: 1px solid #777; font: 16px "Liberation Mono", "Noto Sans CJK SC", monospace; }
.history { height: 25px; display: flex; border-top: 2px solid #707070; border-bottom: 1px solid #999; background: #fff; }
.history p { flex: 1; margin: 0; padding-left: 1px; line-height: 18px; }
.vscroll { width: 16px; display: grid; background: #f0f0f0; }
.vscroll svg { width: 8px; height: 5px; }
.prompt { height: 20px; display: flex; margin-right: 18px; background: #fff; }
.prompt label { padding-left: 1px; line-height: 20px; }
.prompt input { flex: 1; min-width: 0; outline: 0; }
.hscroll { width: 68px; display: flex; align-items: center; background: #f0f0f0; padding: 0 5px 0 8px; gap: 7px; }
.hscroll svg { width: 5px; height: 8px; }
.thumb { width: 15px; height: 16px; border: 1px solid #999; border-radius: 1px; background: linear-gradient(#f6f6f6, #d3d3d3); }
.hscroll .end { margin-left: auto; }

.status { flex: none; height: 23px; display: flex; align-items: center; padding: 2px 3px 0 5px; border-top: 1px solid #999; background: #f0eded; }
.coords { width: 186px; height: 18px; border: 1px solid; border-color: #999 #aaa #aaa #999; font: 10px/17px "Liberation Mono", monospace; white-space: pre; }
.modes { display: flex; gap: 4px; margin-left: 4px; }
.modes button { height: 19px; padding: 0 1px; border: 1px solid; border-color: #fff #aaa #aaa #fff; line-height: 16px; }
.modes .on { border-color: #000 #fff #fff #000; }
.modes .mono { font: 10px/16px "Liberation Mono", monospace; padding-top: 2px; }
.tray { display: flex; align-items: center; gap: 3px; margin-left: auto; }
.tray svg { width: 17px; height: 17px; }
.tray-box { display: flex; gap: 3px; width: 44px; padding-left: 3px; border: 1px solid; border-color: #999 #fff #fff #999; }

.taskbar { flex: none; height: 8px; display: flex; align-items: flex-start; gap: 4px; overflow: hidden; border-top: 1px solid #17395d; background: linear-gradient(90deg, #2e76a6, #67b5d8 180px, #3c95d5 440px, #3a90d0 800px, #1c4f86 1100px, #184474); }
.orb { width: 28px; height: 28px; margin: 1px 138px 0 13px; border-radius: 50%; background: #a6bacb; }
.task { width: 58px; height: 12px; border: 1px solid #255d85; border-radius: 2px; background: radial-gradient(circle at 50% 16px, var(--logo) 14px, transparent 15px), linear-gradient(90deg, #d3ebf6, #8fc4de); }
.red { --logo: #e52a16; } .rose { --logo: #d85b60; } .orange { --logo: #f4a04b; }
.teal { background: linear-gradient(#218674, #218674) 50% 4px / 30px 10px no-repeat, #d9eef8; }
.taskbar time { margin-left: auto; padding-top: 3px; color: #fff; line-height: 12px; }
.peek { width: 14px; height: 10px; margin-left: 18px; border: 1px solid #9ab0c8; background: #55759a; }

.callout { position: absolute; left: 0; top: 0; width: 310px; height: 310px; pointer-events: none; fill: #f73c3c; }
.callout rect { fill: none; stroke: #f73c3c; stroke-width: 4px; }
```
